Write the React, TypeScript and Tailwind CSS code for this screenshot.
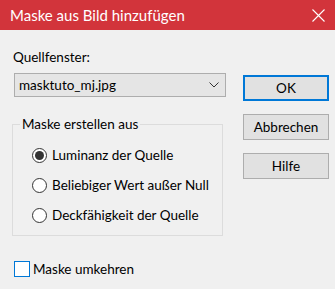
import React from "react";

function Radio({ checked, label }: { checked?: boolean; label: string }) {
  return (
    <div className="flex h-[30px] items-center whitespace-nowrap">
      <span className="flex h-[15px] w-[15px] shrink-0 items-center justify-center rounded-full border border-[#333333] bg-white">
        {checked && <span className="h-[9px] w-[9px] rounded-full bg-[#333333]" />}
      </span>
      <span className="ml-[5px]">{label}</span>
    </div>
  );
}

function Btn({ label, primary }: { label: string; primary?: boolean }) {
  return (
    <div
      className={
        primary
          ? "flex h-[26px] w-[86px] items-center justify-center border-2 border-[#0078d7] bg-[#e1e1e1]"
          : "flex h-[26px] w-[86px] items-center justify-center border border-[#adadad] bg-[#e1e1e1]"
      }
    >
      {label}
    </div>
  );
}

export default function App() {
  return (
    <div
      className="h-[289px] w-[335px] overflow-hidden whitespace-nowrap bg-[#f0f0f0] text-[13.5px] leading-[20px] text-black"
      style={{ fontFamily: 'Lato, "Noto Sans", sans-serif' }}
    >
      <div className="flex h-[30px] items-center justify-between bg-[#d2343b] pl-[10px] pr-[10px] text-[15px] text-white">
        <span>Maske aus Bild hinzufügen</span>
        <svg width="13" height="13" viewBox="0 0 13 13">
          <path d="M0.5 0.5 L12.5 12.5 M12.5 0.5 L0.5 12.5" stroke="white" strokeWidth="1.1" />
        </svg>
      </div>
      <div className="flex">
        <div className="ml-[12px] flex w-[214px] flex-col">
          <div className="ml-[1px] mt-[17px]">Quellfenster:</div>
          <div className="ml-[2px] mt-[6px] flex h-[24px] w-[212px] items-center justify-between border border-[#adadad] bg-[#e5e5e5] pl-[4px] pr-[6px]">
            <span>masktuto_mj.jpg</span>
            <svg width="10" height="6" viewBox="0 0 10 6">
              <path d="M0.5 0.5 L5 5 L9.5 0.5" stroke="#333" fill="none" strokeWidth="1" />
            </svg>
          </div>
          <div className="relative mt-[27px] h-[112px] w-[211px] border border-[#dcdcdc]">
            <span className="absolute left-[7px] top-[-11px] bg-[#f0f0f0] px-[2px]">Maske erstellen aus</span>
            <div className="flex flex-col pl-[19px] pt-[15px]">
              <Radio checked label="Luminanz der Quelle" />
              <Radio label="Beliebiger Wert außer Null" />
              <Radio label="Deckfähigkeit der Quelle" />
            </div>
          </div>
          <div className="ml-[2px] mt-[23px] flex items-center">
            <span className="h-[16px] w-[16px] border border-[#0078d7] bg-white" />
            <span className="ml-[3px]">Maske umkehren</span>
          </div>
        </div>
        <div className="ml-[17px] mt-[45px] flex flex-col gap-[13px]">
          <Btn primary label="OK" />
          <Btn label="Abbrechen" />
          <Btn label="Hilfe" />
        </div>
      </div>
    </div>
  );
}
